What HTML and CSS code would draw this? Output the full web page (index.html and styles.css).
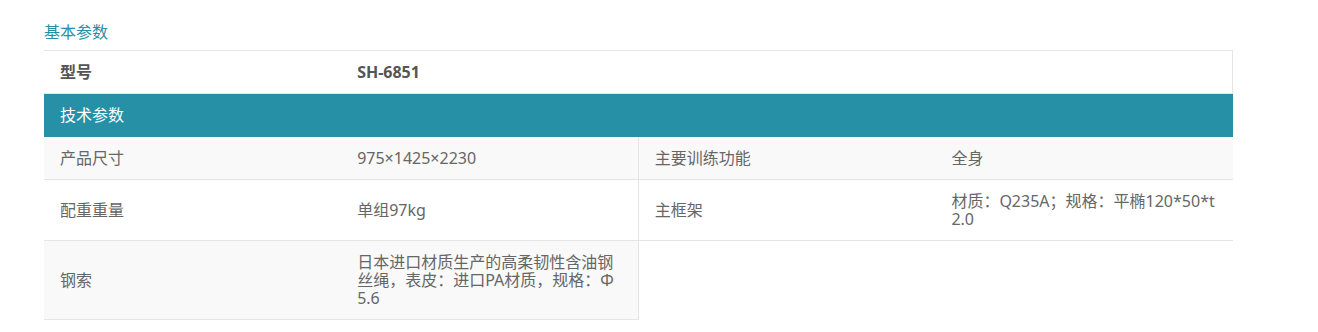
FILE: index.html
```html
<!DOCTYPE html>
<html lang="zh-CN">
<head>
<meta charset="utf-8">
<title>基本参数</title>
<link rel="stylesheet" href="styles.css">
</head>
<body>
<section class="params">
  <h3 class="params-title">基本参数</h3>
  <table class="spec-table">
    <colgroup>
      <col class="col">
      <col class="col">
      <col class="col">
      <col class="col">
    </colgroup>
    <tbody>
      <tr class="row-model">
        <td class="strong">型号</td>
        <td class="strong" colspan="3">SH-6851</td>
      </tr>
      <tr class="row-head">
        <td colspan="4">技术参数</td>
      </tr>
      <tr class="row-alt">
        <td>产品尺寸</td>
        <td class="split">975×1425×2230</td>
        <td>主要训练功能</td>
        <td>全身</td>
      </tr>
      <tr>
        <td>配重重量</td>
        <td class="split">单组97kg</td>
        <td>主框架</td>
        <td>材质：Q235A；规格：平椭120*50*t2.0</td>
      </tr>
      <tr class="row-alt">
        <td>钢索</td>
        <td class="split">日本进口材质生产的高柔韧性含油钢丝绳，表皮：进口PA材质，规格：Φ5.6</td>
      </tr>
    </tbody>
  </table>
</section>
</body>
</html>
```

FILE: styles.css
```css
html, body {
  margin: 0;
  padding: 0;
  background: #fff;
}

body {
  font-family: "Noto Sans", "Noto Sans CJK SC", "Liberation Sans", sans-serif;
  color: #666;
}

.params {
  padding: 20px 0 0 44px;
  width: 1189px;
}

.params-title {
  margin: 0 0 6px;
  font-size: 16px;
  line-height: 24px;
  font-weight: normal;
  color: #2590a6;
}

.spec-table {
  width: 1189px;
  table-layout: fixed;
  border-collapse: collapse;
  font-size: 16px;
  line-height: 18px;
}

.spec-table td {
  padding: 12px 16px;
  vertical-align: middle;
  border-bottom: 1px solid #e5e5e5;
  word-break: break-all;
  overflow-wrap: anywhere;
}

.row-model td {
  border-top: 1px solid #e5e5e5;
}

.row-model td:last-child {
  border-right: 1px solid #e5e5e5;
}

.strong {
  font-weight: bold;
  color: #555;
}

.row-head td {
  background: #2590a6;
  color: #fff;
  border-bottom: 1px solid #2590a6;
}

.row-alt td {
  background: #f9f9f9;
}

.spec-table td.split {
  border-right: 1px solid #e5e5e5;
}
```
